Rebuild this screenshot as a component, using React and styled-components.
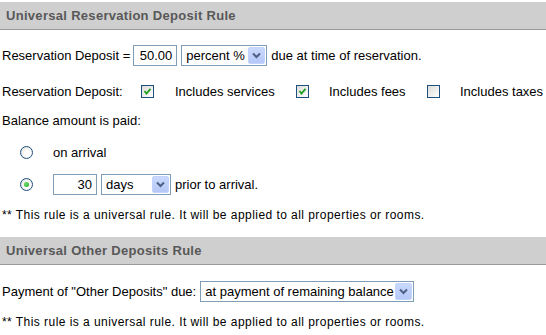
import React from 'react'
import styled, { createGlobalStyle } from 'styled-components'

const GlobalStyle = createGlobalStyle`
  body {
    margin: 0;
    background: #fff;
    font-family: "Liberation Sans", Arial, sans-serif;
    font-size: 13px;
    color: #000;
  }
`

const Page = styled.div`
  width: 546px;
  padding-top: 2px;
`

const Header = styled.div`
  height: 27px;
  margin-top: ${p => p.$top || 0}px;
  background: #cfcfcf;
  border-bottom: 1px solid #9a9a9a;
  display: flex;
  align-items: center;
  padding-left: 6px;
  font-weight: bold;
  font-size: 13px;
  letter-spacing: 0.3px;
  color: #585858;
`

const Row = styled.div`
  display: flex;
  align-items: center;
  height: 22px;
  margin-top: ${p => p.$top}px;
  padding-left: ${p => p.$indent || 2}px;
  white-space: nowrap;
`

const Line = styled.div`
  line-height: 16px;
  margin-top: ${p => p.$top}px;
  padding-left: 2px;
`

const Note = styled.div`
  font-size: 12px;
  letter-spacing: 0.45px;
  line-height: 14px;
  margin-top: ${p => p.$top}px;
  padding-left: 2px;
  white-space: nowrap;
`

const Cell = styled.span`
  display: inline-flex;
  align-items: center;
  width: ${p => (p.$w ? `${p.$w}px` : 'auto')};
  margin-left: ${p => p.$gap || 0}px;
  flex-shrink: 0;
`

const TextBox = styled.div`
  box-sizing: border-box;
  width: ${p => p.$w}px;
  height: 21px;
  border: 1px solid #7f9db9;
  background: #fff;
  margin-left: ${p => p.$gap || 0}px;
  padding-right: 4px;
  display: flex;
  align-items: center;
  justify-content: flex-end;
`

const SelectBox = styled.div`
  box-sizing: border-box;
  width: ${p => p.$w}px;
  height: 21px;
  border: 1px solid #7f9db9;
  background: #fff;
  margin-left: ${p => p.$gap || 0}px;
  margin-right: 4px;
  padding: 1px;
  display: flex;
  align-items: center;
`

const SelectText = styled.span`
  flex: 1;
  padding-left: 3px;
  overflow: hidden;
`

const ArrowButton = styled.span`
  box-sizing: border-box;
  width: 17px;
  height: 17px;
  border: 1px solid #c3d3fd;
  border-radius: 2px;
  background: linear-gradient(#c9d9fd, #b5c8f7);
  display: flex;
  align-items: center;
  justify-content: center;
`

const Check = styled.span`
  box-sizing: border-box;
  width: 13px;
  height: 13px;
  border: 1px solid #1c5180;
  background: linear-gradient(135deg, #dcdcd7, #fff);
  display: flex;
  align-items: center;
  justify-content: center;
`

const Radio = styled.span`
  box-sizing: border-box;
  width: 13px;
  height: 13px;
  border-radius: 50%;
  border: 1px solid #1c5180;
  background: radial-gradient(circle at 60% 60%, #fff 30%, #d6d6ce);
  display: flex;
  align-items: center;
  justify-content: center;
`

const Dot = styled.span`
  width: 5px;
  height: 5px;
  border-radius: 50%;
  background: radial-gradient(circle at 40% 40%, #6ee06e, #21a121);
`

const Select = ({ w, gap, children }) => (
  <SelectBox $w={w} $gap={gap}>
    <SelectText>{children}</SelectText>
    <ArrowButton>
      <svg width="9" height="7" viewBox="0 0 9 7">
        <path d="M1 1.5 L4.5 5 L8 1.5" fill="none" stroke="#4d6185" strokeWidth="2" />
      </svg>
    </ArrowButton>
  </SelectBox>
)

const CheckBox = ({ checked }) => (
  <Check>
    {checked && (
      <svg width="9" height="9" viewBox="0 0 9 9">
        <path d="M1.5 4 L3.5 6.5 L7.5 1.8" fill="none" stroke="#21a121" strokeWidth="1.8" />
      </svg>
    )}
  </Check>
)

const RadioButton = ({ checked }) => <Radio>{checked && <Dot />}</Radio>

const App = () => (
  <>
    <GlobalStyle />
    <Page>
      <Header>Universal Reservation Deposit Rule</Header>

      <Row $top={14}>
        Reservation Deposit =
        <TextBox $w={44} $gap={3}>50.00</TextBox>
        <Select w={86} gap={4}>percent %</Select>
        due at time of reservation.
      </Row>

      <Row $top={14}>
        <Cell $w={139}>Reservation Deposit:</Cell>
        <Cell $w={34}><CheckBox checked /></Cell>
        <Cell $w={121}>Includes services</Cell>
        <Cell $w={33}><CheckBox checked /></Cell>
        <Cell $w={98}>Includes fees</Cell>
        <Cell $w={33}><CheckBox /></Cell>
        <Cell>Includes taxes</Cell>
      </Row>

      <Line $top={11}>Balance amount is paid:</Line>

      <Row $top={12} $indent={20}>
        <Cell $w={33}><RadioButton /></Cell>
        on arrival
      </Row>

      <Row $top={10} $indent={20}>
        <Cell $w={33}><RadioButton checked /></Cell>
        <TextBox $w={44}>30</TextBox>
        <Select w={70} gap={4}>days</Select>
        prior to arrival.
      </Row>

      <Note $top={13}>** This rule is a universal rule. It will be applied to all properties or rooms.</Note>

      <Header $top={15}>Universal Other Deposits Rule</Header>

      <Row $top={15}>
        Payment of "Other Deposits" due:
        <Select w={214} gap={4}>at payment of remaining balance</Select>
      </Row>

      <Note $top={13}>** This rule is a universal rule. It will be applied to all properties or rooms.</Note>
    </Page>
  </>
)

export default App
